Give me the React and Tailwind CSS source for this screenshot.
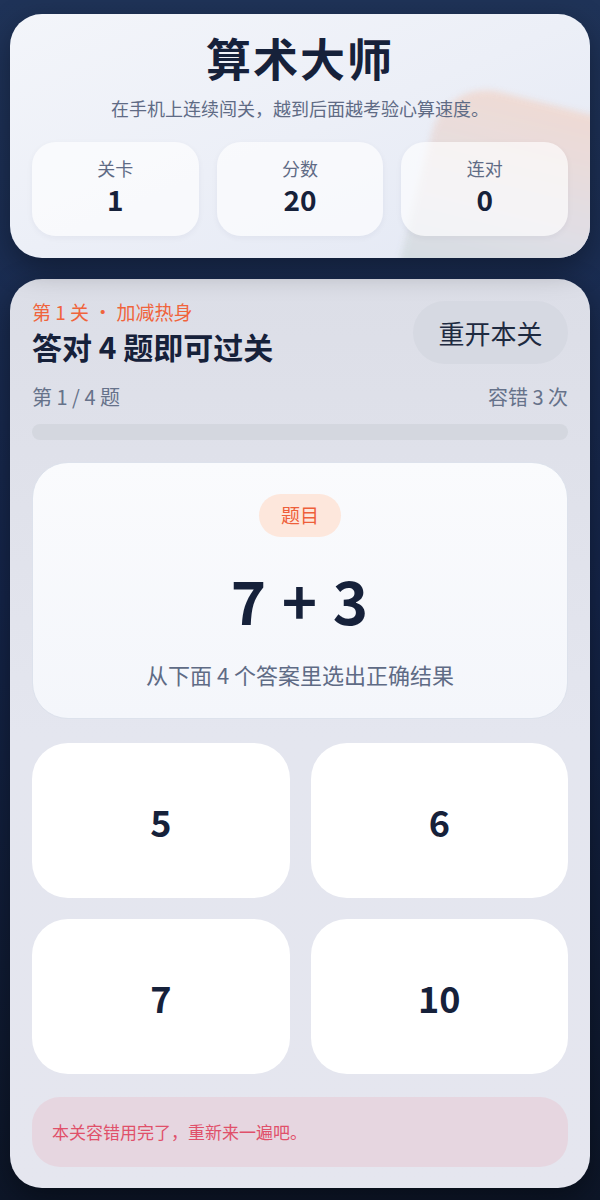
export default function App() {
    const stats = [
        { label: '关卡', value: '1' },
        { label: '分数', value: '20' },
        { label: '连对', value: '0' },
    ];
    const answers = ['5', '6', '7', '10'];

    return (
        <div
            className="min-h-[1200px] w-[600px] bg-gradient-to-b from-[#1f3358] via-[#15254a] to-[#0d1628] px-[10px] pt-[14px] pb-[12px]"
            style={{ fontFamily: '"Noto Sans CJK SC", "Noto Sans", sans-serif' }}
        >
            {/* Header */}
            <div className="relative overflow-hidden rounded-[32px] bg-gradient-to-br from-[#f3f5fa] via-[#eceff7] to-[#e3e8f4] px-[22px] pt-[16px] pb-[22px] shadow-[0_10px_30px_rgba(0,0,0,0.35)]">
                {/* soft decorative blob */}
                <div className="absolute left-[400px] top-[92px] h-[260px] w-[260px] rotate-[14deg] rounded-[56px] bg-gradient-to-b from-[#f0d9d1] via-[#dedde5] to-[#c4dbda] opacity-90 blur-[3px]" />
                <div className="relative">
                    <h1 className="text-center text-[45px] leading-[56px] font-bold text-[#16213a] tracking-[2px]">算术大师</h1>
                    <p className="mt-[10px] text-center text-[18px] leading-[24px] text-[#5f6b85]">在手机上连续闯关，越到后面越考验心算速度。</p>
                    <div className="mt-[22px] grid grid-cols-3 gap-[18px]">
                        {stats.map(s => (
                            <div key={s.label} className="flex h-[94px] flex-col items-center rounded-[24px] bg-white/65 pt-[15px] shadow-[0_2px_6px_rgba(30,40,80,0.05)]">
                                <div className="text-[18px] leading-[22px] text-[#5f6b85]">{s.label}</div>
                                <div className="mt-[3px] text-[28px] leading-[34px] font-bold text-[#16213a]">{s.value}</div>
                            </div>
                        ))}
                    </div>
                </div>
            </div>

            {/* Game panel */}
            <div className="mt-[21px] rounded-[32px] bg-gradient-to-b from-[#dcdee7] via-[#e4e6ef] to-[#e5e6ef] px-[22px] pt-[21px] pb-[21px] shadow-[0_10px_30px_rgba(0,0,0,0.4)]">
                <div className="flex items-center justify-between">
                    <div>
                        <div className="text-[19px] leading-[24px] text-[#f0643c]">第 1 关 · 加减热身</div>
                        <div className="mt-[4px] text-[30px] leading-[36px] font-bold text-[#16213a]">答对 4 题即可过关</div>
                    </div>
                    <button className="h-[63px] w-[155px] rounded-full bg-[#d6d9e2] text-[26px] text-[#1e2a40]">重开本关</button>
                </div>

                <div className="mt-[20px] flex items-center justify-between text-[20px] leading-[26px] text-[#66728a]">
                    <span>第 1 / 4 题</span>
                    <span>容错 3 次</span>
                </div>
                <div className="mt-[14px] h-[16px] rounded-full bg-[#d4d7df]" />

                <div className="mt-[22px] flex h-[257px] flex-col items-center rounded-[36px] border border-[#dde2ec] bg-gradient-to-b from-[#fafbfd] to-[#f4f6fb] pt-[31px]">
                    <div className="flex h-[43px] w-[82px] items-center justify-center rounded-full bg-[#fde7dc] text-[19px] text-[#ee5f3a]">题目</div>
                    <div className="mt-[24px] text-[60px] leading-[76px] font-bold text-[#16213a] tracking-[1px]">7 + 3</div>
                    <div className="mt-[22px] text-[22px] leading-[30px] text-[#5f6b85]">从下面 4 个答案里选出正确结果</div>
                </div>

                <div className="mt-[24px] grid grid-cols-2 gap-x-[21px] gap-y-[21px]">
                    {answers.map(a => (
                        <button key={a} className="h-[155px] rounded-[36px] bg-white text-[36px] font-bold text-[#16213a]">{a}</button>
                    ))}
                </div>

                <div className="mt-[23px] flex h-[70px] items-center rounded-[28px] bg-[#e6d6e0] px-[20px] text-[17px] text-[#e0506a]">
                    本关容错用完了，重新来一遍吧。
                </div>
            </div>
        </div>
    );
}
